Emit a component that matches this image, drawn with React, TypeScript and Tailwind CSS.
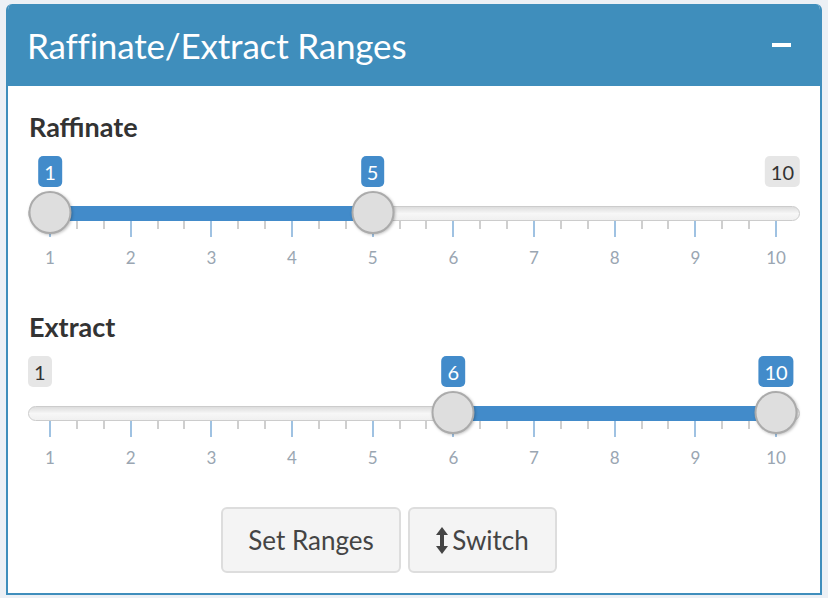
import type { ReactNode } from 'react'

const FONT = { fontFamily: 'Lato, "Source Sans Pro", "Liberation Sans", sans-serif' }

// value -> x offset inside the slider rail (rail starts at page x 28)
const STEP = 80.67
const pos = (v: number) => 22 + (v - 1) * STEP

/* ── Value bubble above a handle ── */
function Bubble({ x, children, tone = 'blue', align = 'center' }: { x: number; children: ReactNode; tone?: 'blue' | 'gray'; align?: 'center' | 'left' | 'right' }) {
  const cls = tone === 'blue' ? 'bg-[#428bca] text-white' : 'bg-[#e6e6e6] text-[#333]'
  const shift = align === 'center' ? '-translate-x-1/2' : align === 'right' ? '-translate-x-full' : ''
  return (
    <span
      className={`absolute top-[6px] h-[31px] px-[6px] rounded-[5px] flex items-center text-[20px] leading-none ${cls} ${shift}`}
      style={{ left: x }}
    >
      {children}
    </span>
  )
}

function Handle({ x }: { x: number }) {
  return (
    <span
      className="absolute top-[41px] w-[43px] h-[43px] -translate-x-1/2 rounded-full bg-[#dedede] border-2 border-[#ababab] shadow-[1px_1px_3px_rgba(0,0,0,0.25)]"
      style={{ left: x }}
    />
  )
}

/* ── ionRangeSlider look-alike (shiny skin) ── */
function RangeSlider({ from, to }: { from: number; to: number }) {
  const ticks: { x: number; major: boolean }[] = []
  for (let v = 1; v <= 10; v++) {
    ticks.push({ x: pos(v), major: true })
    if (v < 10) {
      ticks.push({ x: pos(v) + STEP / 3, major: false })
      ticks.push({ x: pos(v) + (2 * STEP) / 3, major: false })
    }
  }
  return (
    <div className="relative w-[772px] h-[120px]">
      {/* min / max labels, hidden when a handle bubble sits on them */}
      {from !== 1 && <Bubble x={0} tone="gray" align="left">1</Bubble>}
      {to !== 10 && <Bubble x={772} tone="gray" align="right">10</Bubble>}

      {/* rail */}
      <div className="absolute left-0 top-[56px] w-[772px] h-[15px] rounded-full border border-[#cccccc] bg-gradient-to-b from-[#dddddd] via-[#f7f7f7] to-[#f0f0f0]" />
      <div
        className="absolute top-[56px] h-[15px] bg-[#428bca]"
        style={{ left: pos(from), width: pos(to) - pos(from) }}
      />

      {/* grid */}
      {ticks.map((t, i) => (
        <span
          key={i}
          className={`absolute top-[71px] w-[2px] -translate-x-1/2 ${t.major ? 'h-[16px] bg-[#9fc2e2]' : 'h-[8px] bg-[#cfcfcf]'}`}
          style={{ left: t.x }}
        />
      ))}
      {Array.from({ length: 10 }, (_, i) => (
        <span
          key={i}
          className="absolute top-[98px] -translate-x-1/2 text-[17px] leading-[20px] text-[#9aa6b2]"
          style={{ left: pos(i + 1) }}
        >
          {i + 1}
        </span>
      ))}

      <Handle x={pos(from)} />
      <Handle x={pos(to)} />
      <Bubble x={pos(from)}>{from}</Bubble>
      <Bubble x={pos(to)}>{to}</Bubble>
    </div>
  )
}

function Field({ label, from, to }: { label: string; from: number; to: number }) {
  return (
    <div className="flex flex-col">
      <div className="h-[40px] text-[27px] leading-[34px] font-bold text-[#333] pl-[1px]">{label}</div>
      <RangeSlider from={from} to={to} />
    </div>
  )
}

function ArrowsV() {
  return (
    <svg width="12" height="27" viewBox="0 0 12 27" className="fill-[#444]">
      <polygon points="0,8 6,0 12,8" />
      <rect x="4" y="7" width="4" height="13" />
      <polygon points="0,19 6,27 12,19" />
    </svg>
  )
}

function Btn({ children, w }: { children: ReactNode; w: string }) {
  return (
    <button className={`${w} h-[66px] flex items-center justify-center gap-[4px] rounded-[6px] border-2 border-[#dddddd] bg-[#f4f4f4] text-[26px] text-[#444]`}>
      {children}
    </button>
  )
}

export default function App() {
  return (
    <div className="w-[828px] h-[598px] bg-[#ecf0f5] pt-[4px] pl-[6px]" style={FONT}>
      <section className="w-[816px] h-[591px] rounded-t-[6px] border-2 border-t-0 border-[#3f8ebc] bg-white overflow-hidden flex flex-col">
        <header className="h-[82px] shrink-0 bg-[#3f8ebc] flex items-center justify-between pl-[21px] pr-[31px] -mx-[2px]">
          <h1 className="text-[35px] font-normal text-white tracking-[-0.005em]">Raffinate/Extract Ranges</h1>
          <span className="w-[19px] h-[4px] bg-white" />
        </header>
        <div className="flex flex-col pl-[20px] pt-[24px]">
          <Field label="Raffinate" from={1} to={5} />
          <div className="h-[40px]" />
          <Field label="Extract" from={6} to={10} />
          <div className="flex gap-[7px] pl-[193px] pt-[37px]">
            <Btn w="w-[180px]">Set Ranges</Btn>
            <Btn w="w-[149px]"><ArrowsV />Switch</Btn>
          </div>
        </div>
      </section>
    </div>
  )
}
